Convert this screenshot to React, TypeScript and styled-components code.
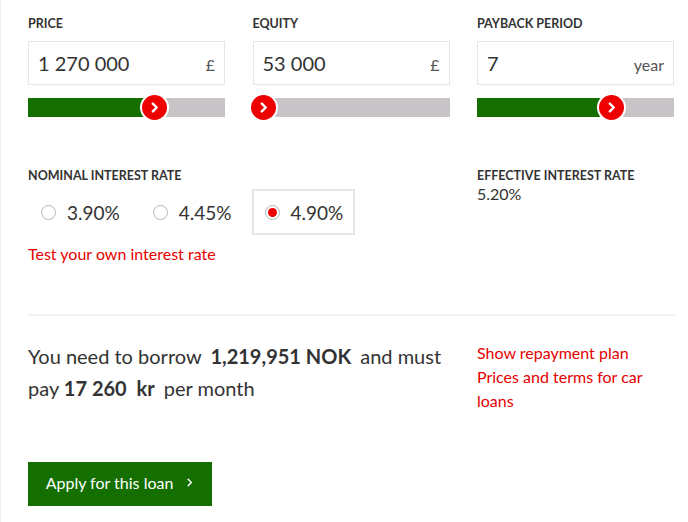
import React from "react";
import styled, { createGlobalStyle } from "styled-components";

const Global = createGlobalStyle`
  html, body { margin: 0; padding: 0; background: #fff; }
  body { font-family: Lato, "Open Sans", sans-serif; color: #333; }
  * { box-sizing: border-box; }
`;

const Page = styled.div`
  width: 688px;
  height: 522px;
  border-left: 1px solid #f2f2f2;
  padding: 16px 14px 0 27px;
  overflow: hidden;
`;

const Columns = styled.div`
  display: grid;
  grid-template-columns: repeat(3, 197px);
  justify-content: space-between;
`;

const Field = styled.div`
  display: flex;
  flex-direction: column;
`;

const Label = styled.div`
  font-size: 12.5px;
  font-weight: 700;
  text-transform: uppercase;
  color: #333;
  line-height: 16px;
`;

const InputBox = styled.div`
  margin-top: 9px;
  height: 44px;
  border: 1px solid #e6e6e6;
  display: flex;
  align-items: center;
  justify-content: space-between;
  padding: 0 9px 0 9px;
`;

const Value = styled.span`
  font-size: 20px;
  color: #333;
`;

const Unit = styled.span`
  font-size: 16px;
  color: #555;
  padding-top: 3px;
`;

const Track = styled.div`
  position: relative;
  margin-top: 13px;
  height: 19px;
  background: #c8c3c6;
`;

const Fill = styled.div`
  height: 100%;
  background: #146e00;
`;

const Thumb = styled.div`
  position: absolute;
  top: 50%;
  width: 29px;
  height: 29px;
  margin-left: -14.5px;
  margin-top: -14.5px;
  border-radius: 50%;
  background: #ee0000;
  border: 2px solid #fff;
  display: flex;
  align-items: center;
  justify-content: center;
`;

const RateRow = styled.div`
  display: grid;
  grid-template-columns: 422px 197px;
  justify-content: space-between;
  margin-top: 51px;
`;

const Options = styled.div`
  display: flex;
  align-items: center;
  gap: 8px;
  margin-top: 5px;
`;

const Option = styled.div<{ $selected?: boolean }>`
  display: flex;
  align-items: center;
  height: 46px;
  padding: 0 10px 0 11px;
  border: 2px solid ${(p) => (p.$selected ? "#e6e6e6" : "transparent")};
  font-size: 19px;
  color: #333;
  gap: 11px;
`;

const Radio = styled.span<{ $checked?: boolean }>`
  width: 15px;
  height: 15px;
  border-radius: 50%;
  border: 1px solid #b5b5b5;
  background: #fff;
  display: inline-flex;
  align-items: center;
  justify-content: center;
  &::after {
    content: "";
    width: 9px;
    height: 9px;
    border-radius: 50%;
    background: ${(p) => (p.$checked ? "#ee0000" : "transparent")};
  }
`;

const RedLink = styled.a<{ $gap?: number }>`
  color: #e60000;
  font-size: 16px;
  text-decoration: none;
  line-height: 24px;
  display: block;
  margin-top: ${(p) => p.$gap ?? 0}px;
`;

const Effective = styled.div`
  font-size: 16px;
  color: #333;
  line-height: 20px;
`;

const Divider = styled.hr`
  margin: 48px 0 0;
  border: 0;
  border-top: 2px solid #f2f2f2;
  width: 647px;
`;

const Summary = styled.div`
  display: grid;
  grid-template-columns: 422px 197px;
  justify-content: space-between;
  margin-top: 24px;
`;

const Sentence = styled.p`
  margin: 0;
  font-size: 20px;
  line-height: 32px;
  color: #333;
`;

const Strong = styled.b<{ $tight?: boolean }>`
  font-weight: 700;
  margin: 0 4px 0 ${(p) => (p.$tight ? "0" : "4px")};
`;

const Links = styled.div`
  padding-top: 1px;
`;

const ApplyButton = styled.button`
  margin-top: 49px;
  height: 44px;
  width: 184px;
  background: #146e00;
  border: 0;
  color: #fff;
  font-family: Lato, sans-serif;
  font-size: 16px;
  line-height: 20px;
  display: flex;
  align-items: center;
  justify-content: center;
  gap: 12px;
  padding: 0 0 3px;
`;

const Chevron = ({ size = 10, color = "#fff", w = 2.2 }: { size?: number; color?: string; w?: number }) => (
  <svg width={size} height={size} viewBox="0 0 10 10">
    <path d="M3.5 1.5 L7 5 L3.5 8.5" fill="none" stroke={color} strokeWidth={w} strokeLinecap="round" strokeLinejoin="round" />
  </svg>
);

const sliders = [
  { label: "Price", value: "1 270 000", unit: "£", pct: 64 },
  { label: "Equity", value: "53 000", unit: "£", pct: 5.5 },
  { label: "Payback period", value: "7", unit: "year", pct: 68.5 },
];

export default function App() {
  return (
    <Page>
      <Global />
      <Columns>
        {sliders.map((s) => (
          <Field key={s.label}>
            <Label>{s.label}</Label>
            <InputBox>
              <Value>{s.value}</Value>
              <Unit>{s.unit}</Unit>
            </InputBox>
            <Track>
              <Fill style={{ width: `${s.pct}%` }} />
              <Thumb style={{ left: `${s.pct}%` }}>
                <Chevron size={11} />
              </Thumb>
            </Track>
          </Field>
        ))}
      </Columns>
      <RateRow>
        <div>
          <Label>Nominal interest rate</Label>
          <Options>
            <Option><Radio />3.90%</Option>
            <Option><Radio />4.45%</Option>
            <Option $selected><Radio $checked />4.90%</Option>
          </Options>
          <RedLink href="#" $gap={7}>Test your own interest rate</RedLink>
        </div>
        <div>
          <Label>Effective interest rate</Label>
          <Effective>5.20%</Effective>
        </div>
      </RateRow>
      <Divider />
      <Summary>
        <Sentence>
          You need to borrow <Strong>1,219,951 NOK</Strong> and must pay <Strong $tight>17 260&nbsp; kr</Strong> per month
        </Sentence>
        <Links>
          <RedLink href="#">Show repayment plan</RedLink>
          <RedLink href="#">Prices and terms for car loans</RedLink>
        </Links>
      </Summary>
      <ApplyButton>
        Apply for this loan <Chevron size={9} w={1.6} />
      </ApplyButton>
    </Page>
  );
}
